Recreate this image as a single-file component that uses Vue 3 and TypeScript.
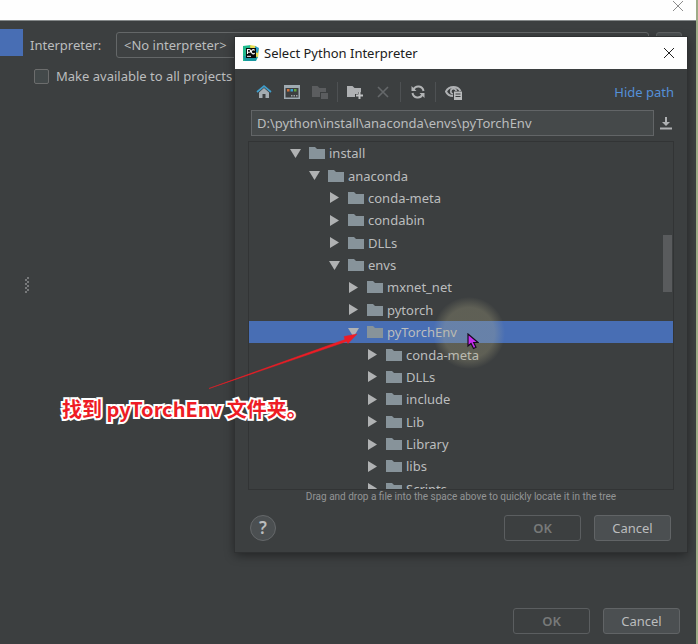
<script setup lang="ts">
import { ref } from 'vue'

interface TreeNode {
  id: number
  name: string
  level: number
  open: boolean
}

const nodes = ref<TreeNode[]>([
  { id: 1, name: 'install', level: 0, open: true },
  { id: 2, name: 'anaconda', level: 1, open: true },
  { id: 3, name: 'conda-meta', level: 2, open: false },
  { id: 4, name: 'condabin', level: 2, open: false },
  { id: 5, name: 'DLLs', level: 2, open: false },
  { id: 6, name: 'envs', level: 2, open: true },
  { id: 7, name: 'mxnet_net', level: 3, open: false },
  { id: 8, name: 'pytorch', level: 3, open: false },
  { id: 9, name: 'pyTorchEnv', level: 3, open: true },
  { id: 10, name: 'conda-meta', level: 4, open: false },
  { id: 11, name: 'DLLs', level: 4, open: false },
  { id: 12, name: 'include', level: 4, open: false },
  { id: 13, name: 'Lib', level: 4, open: false },
  { id: 14, name: 'Library', level: 4, open: false },
  { id: 15, name: 'libs', level: 4, open: false },
  { id: 16, name: 'Scripts', level: 4, open: false },
])

const selected = ref(9)
const path = ref('D:\\python\\install\\anaconda\\envs\\pyTorchEnv')
const shared = ref(false)
</script>

<template>
  <div class="window">
    <header class="window-bar">
      <button class="close" aria-label="Close window">
        <svg width="12" height="12" viewBox="0 0 12 12"><path d="M1 1l10 10M11 1L1 11" stroke="#8c8c8c" fill="none" /></svg>
      </button>
    </header>

    <main class="split">
      <div class="sidebar"><div class="sidebar-item"></div></div>
      <div class="grip"></div>
      <form class="settings" @submit.prevent>
        <div class="field">
          <label for="interpreter">Interpreter:</label>
          <select id="interpreter"><option>&lt;No interpreter&gt;</option></select>
          <button class="more" type="button" aria-label="Interpreter options"></button>
        </div>
        <div class="check">
          <input id="shared" v-model="shared" type="checkbox" />
          <label for="shared">Make available to all projects</label>
        </div>
      </form>
    </main>

    <footer class="window-actions">
      <button class="btn" disabled>OK</button>
      <button class="btn primary">Cancel</button>
    </footer>

    <section class="dialog" role="dialog" aria-labelledby="dialog-title">
      <header class="dialog-bar">
        <svg class="logo" width="16" height="16" viewBox="0 0 16 16">
          <path d="M0 1L8 0L10 16H0z" fill="#1fb98c" />
          <path d="M7 0L13 1L16 5L15 13L8 10z" fill="#e9dc50" />
          <path d="M12 1L16 3L15 8L12 7z" fill="#2a9fc9" />
          <path d="M0 11L8 11L15 12L13 16H2z" fill="#1997a0" />
          <rect x="3" y="3" width="10" height="10" fill="#080808" />
          <path d="M4.500 9V4.500H6.200a1.400 1.400 0 0 1 0 2.800H4.500M11.700 5.300a2 2 0 1 0 0 2.900" fill="none" stroke="#fff" stroke-width="1.100" />
          <path d="M4 11.300h4" stroke="#fff" />
        </svg>
        <h1 id="dialog-title">Select Python Interpreter</h1>
        <button class="close" aria-label="Close dialog">
          <svg width="12" height="12" viewBox="0 0 12 12"><path d="M1 1l10 10M11 1L1 11" stroke="#222" fill="none" /></svg>
        </button>
      </header>

      <div class="dialog-body">
        <div class="toolbar">
          <button class="tool" aria-label="Home">
            <svg width="16" height="16" viewBox="0 0 16 16">
              <path d="M3 8.500L8 4l5 4.500V14H9.500v-4h-3v4H3z" fill="#a4acb1" />
              <path d="M1 8L8 2l7 6" fill="none" stroke="#3f9dcb" stroke-width="1.700" />
            </svg>
          </button>
          <button class="tool" aria-label="Project directory">
            <svg width="16" height="16" viewBox="0 0 16 16">
              <path d="M0 1h16v14H0zM1.500 4v9.500h13V4z" fill="#a0abb2" fill-rule="evenodd" />
              <path d="M3 5h2.500v2.500H3z" fill="#d0703b" /><path d="M6.500 5H9v2.500H6.500z" fill="#3aa0d0" /><path d="M10 5h2.500v2.500H10z" fill="#62a53f" />
              <path d="M7 11h1.500v1.500H7zM9.500 11H11v1.500H9.500zM12 11h1.500v1.500H12z" fill="#9aa0a3" />
            </svg>
          </button>
          <button class="tool" aria-label="Module directory" disabled>
            <svg width="16" height="16" viewBox="0 0 16 16">
              <path d="M0 2h5.500l2 2H14v4H8v5H0z" fill="#5b5d5f" /><path d="M9 9h7v6H9z" fill="#5b5d5f" />
            </svg>
          </button>
          <span class="divider"></span>
          <button class="tool" aria-label="New folder">
            <svg width="16" height="16" viewBox="0 0 16 16">
              <path d="M0 2h5.500l2 2H14v4h-3v2H8v3H0z" fill="#afb1b3" />
              <path d="M12.500 8v7M9 11.500h7" stroke="#bfc1c2" stroke-width="2" />
            </svg>
          </button>
          <button class="tool" aria-label="Delete" disabled>
            <svg width="16" height="16" viewBox="0 0 16 16"><path d="M3 3l10 10M13 3L3 13" stroke="#65686a" stroke-width="1.600" /></svg>
          </button>
          <span class="divider"></span>
          <button class="tool" aria-label="Refresh">
            <svg width="16" height="16" viewBox="0 0 16 16">
              <path d="M3.500 5.500a5.300 5.300 0 0 1 10 1.500M12.500 10.500a5.300 5.300 0 0 1-10-1.500" fill="none" stroke="#b2b4b5" stroke-width="2" />
              <path d="M1.500 2v5h5zM14.500 14V9h-5z" fill="#b2b4b5" />
            </svg>
          </button>
          <span class="divider"></span>
          <button class="tool" aria-label="Show hidden files">
            <svg width="18" height="16" viewBox="0 0 18 16">
              <path d="M8 12C4.500 12 2 9.800 1 7.500C2.500 4.500 5 3 8.500 3S14 4.500 15.500 7" fill="none" stroke="#afb1b3" stroke-width="2" />
              <path d="M8 10a2.700 2.700 0 1 1 3.200-3" fill="none" stroke="#afb1b3" stroke-width="1.600" />
              <path d="M9 7.500h8V16H9zM10.500 9.500v1h5v-1zM10.500 12v1h5v-1z" fill="#b9bbbc" fill-rule="evenodd" />
            </svg>
          </button>
          <a class="hide-path" href="#">Hide path</a>
        </div>

        <div class="path-row">
          <input v-model="path" type="text" aria-label="Path" spellcheck="false" />
          <button class="history" aria-label="Path history">
            <svg width="14" height="14" viewBox="0 0 14 14"><path d="M6 1h2v5h3L7 10 3 6h3zM1 11.500h12v2H1z" fill="#afb1b3" /></svg>
          </button>
        </div>

        <div class="tree-pane">
          <ul class="tree" role="tree">
            <li
              v-for="node in nodes"
              :key="node.id"
              class="node"
              :class="[`level-${node.level}`, { selected: node.id === selected }]"
              role="treeitem"
              :aria-expanded="node.open"
              @click="selected = node.id"
            >
              <svg class="toggle" width="11" height="11" viewBox="0 0 11 11">
                <path :d="node.open ? 'M0 1h11L5.500 10z' : 'M1 0v11L10 5.500z'" fill="#b0b2b3" />
              </svg>
              <svg class="folder" width="16" height="12" viewBox="0 0 16 12">
                <path d="M0 0h6l2 2h8v10H0z" fill="#87939a" />
              </svg>
              <span>{{ node.name }}</span>
            </li>
          </ul>
          <div class="thumb"></div>
        </div>
        <p class="hint">Drag and drop a file into the space above to quickly locate it in the tree</p>

        <div class="dialog-actions">
          <button class="help" aria-label="Help">?</button>
          <button class="btn" disabled>OK</button>
          <button class="btn primary">Cancel</button>
        </div>
      </div>
    </section>

    <div class="spotlight"></div>
    <svg class="pointer" width="12" height="17" viewBox="0 0 12 17">
      <path d="M1 1v12l3-2.500 2.500 5 2.500-1.200L6.700 9.500H11z" fill="#c62cf0" stroke="#160a1c" stroke-width="1.200" />
    </svg>
    <svg class="arrow" width="150" height="60" viewBox="0 0 150 60">
      <path d="M1 57.500L137 8.500 136 5.500 149 3 140 12.500 138.500 10.500z" fill="#ee1c25" stroke="#ee1c25" stroke-width=".5" />
    </svg>
    <p class="callout" lang="zh">找到 pyTorchEnv 文件夹。</p>
  </div>
</template>

<style>
body {
  margin: 0;
  background: #3c3f41;
}
</style>

<style scoped>
.window {
  position: relative;
  box-sizing: border-box;
  min-height: 100vh;
  display: flex;
  flex-direction: column;
  overflow: hidden;
  border-right: 2px solid #9eac88;
  background: #3c3f40;
  color: #bbbdbe;
  font-family: "Noto Sans", "Open Sans", sans-serif;
  font-size: 13px;
  line-height: 18px;
}
button,
input,
select {
  box-sizing: border-box;
  margin: 0;
  font: inherit;
  color: inherit;
}
button {
  padding: 0;
  border: 0;
  background: none;
}
svg {
  display: block;
  flex: none;
}
.window-bar {
  display: flex;
  justify-content: flex-end;
  height: 20px;
  padding-right: 12px;
  background: #fefefe;
  border-bottom: 1px solid #85898a;
}
.window-bar .close {
  height: 10px;
}
.split {
  flex: 1;
  display: flex;
}
.sidebar {
  width: 23px;
  padding-top: 8px;
}
.sidebar-item {
  height: 27px;
  background: #486eb4;
}
.grip {
  align-self: center;
  width: 4px;
  height: 16px;
  margin: 0 1px 0 2px;
  background: repeating-conic-gradient(#77797a 0 25%, #3c3f41 0 50%) 0 0 / 4px 4px;
}
.settings {
  flex: 1;
  padding: 11px 14px 0 0;
}
.field {
  display: flex;
  align-items: center;
  gap: 7px;
}
.field label {
  width: 79px;
}
.field select {
  flex: 1;
  height: 26px;
  padding: 0 7px;
  appearance: none;
  border: 1px solid #646768;
  border-radius: 3px;
  background: #3e4142;
}
.more {
  width: 26px;
  height: 26px;
  border: 1px solid #606364;
  border-radius: 3px;
  background: #4c5052;
}
.check {
  display: flex;
  align-items: center;
  gap: 7px;
  padding: 9px 0 0 4px;
}
.check input {
  width: 15px;
  height: 15px;
  appearance: none;
  border: 1px solid #6c6d6d;
  border-radius: 2px;
  background: #43494a;
}
.window-actions {
  display: flex;
  justify-content: flex-end;
  align-items: flex-end;
  gap: 13px;
  height: 85px;
  padding: 0 16px 10px;
}
.btn {
  width: 77px;
  height: 26px;
  border: 1px solid #5b5e60;
  border-radius: 3px;
}
.btn:disabled {
  color: #777979;
  font-weight: 600;
}
.btn.primary {
  background: #4b4f51;
  border-color: #616466;
}
.dialog {
  position: absolute;
  top: 37px;
  left: 235px;
  right: 9px;
  background: #3c3f40;
  box-shadow: 0 0 0 1px #2f3132, 0 3px 10px rgba(0, 0, 0, 0.45);
}
.dialog-bar {
  display: flex;
  align-items: center;
  gap: 5px;
  height: 32px;
  padding: 0 12px 0 8px;
  background: #fefefe;
}
.dialog-bar h1 {
  flex: 1;
  margin: 0;
  color: #202020;
  font-size: 13px;
  font-weight: 400;
}
.dialog-body {
  padding: 11px 13px;
}
.toolbar {
  display: flex;
  align-items: center;
  gap: 12px;
  height: 24px;
  padding: 0 0 0 8px;
}
.divider {
  width: 1px;
  height: 20px;
  margin: 0 -3px;
  background: #4e5153;
}
.hide-path {
  margin-left: auto;
  color: #5590d8;
  text-decoration: none;
}
.path-row {
  display: flex;
  align-items: center;
  gap: 5px;
  padding: 6px 1px 5px 3px;
}
.path-row input {
  flex: 1;
  min-width: 0;
  height: 26px;
  padding: 0 5px;
  border: 1px solid #626567;
  background: #45494a;
  outline: 0;
}
.tree-pane {
  position: relative;
  height: 347px;
  overflow: hidden;
  border: 1px solid #323435;
}
.tree {
  display: grid;
  grid-template-rows: repeat(16, 1fr);
  height: 358px;
  margin: 0;
  padding: 0;
  list-style: none;
}
.node {
  display: flex;
  align-items: center;
  min-height: 0;
}
.node.selected {
  background: #486eb4;
}
.level-0 { padding-left: 41px; }
.level-1 { padding-left: 60px; }
.level-2 { padding-left: 80px; }
.level-3 { padding-left: 99px; }
.level-4 { padding-left: 118px; }
.folder {
  margin: 0 4px 0 8px;
}
.thumb {
  position: absolute;
  top: 93px;
  right: 1px;
  width: 9px;
  height: 57px;
  background: #595b5d;
}
.hint {
  margin: 0;
  color: #929495;
  font-family: Roboto, sans-serif;
  font-size: 10px;
  line-height: 13px;
  text-align: center;
}
.dialog-actions {
  display: flex;
  align-items: center;
  gap: 13px;
  padding: 12px 3px 0 2px;
}
.help {
  width: 26px;
  height: 26px;
  margin-right: auto;
  border: 1px solid #65686a;
  border-radius: 50%;
  background: #4b4f51;
  font-size: 17px;
  font-weight: 600;
}
.spotlight {
  position: absolute;
  top: 297px;
  left: 433px;
  width: 72px;
  height: 72px;
  border-radius: 50%;
  background: radial-gradient(circle, rgba(185, 180, 140, 0.28) 0 50%, rgba(185, 180, 140, 0) 71%);
  pointer-events: none;
}
.pointer {
  position: absolute;
  top: 333px;
  left: 467px;
}
.arrow {
  position: absolute;
  top: 331px;
  left: 208px;
}
.callout {
  position: absolute;
  top: 396px;
  left: 62px;
  margin: 0;
  color: #ee1c25;
  font-family: "Noto Sans CJK SC", sans-serif;
  font-size: 20px;
  font-weight: 700;
  line-height: 26px;
  white-space: nowrap;
  -webkit-text-stroke: 4px #fff;
  paint-order: stroke fill;
}
</style>
